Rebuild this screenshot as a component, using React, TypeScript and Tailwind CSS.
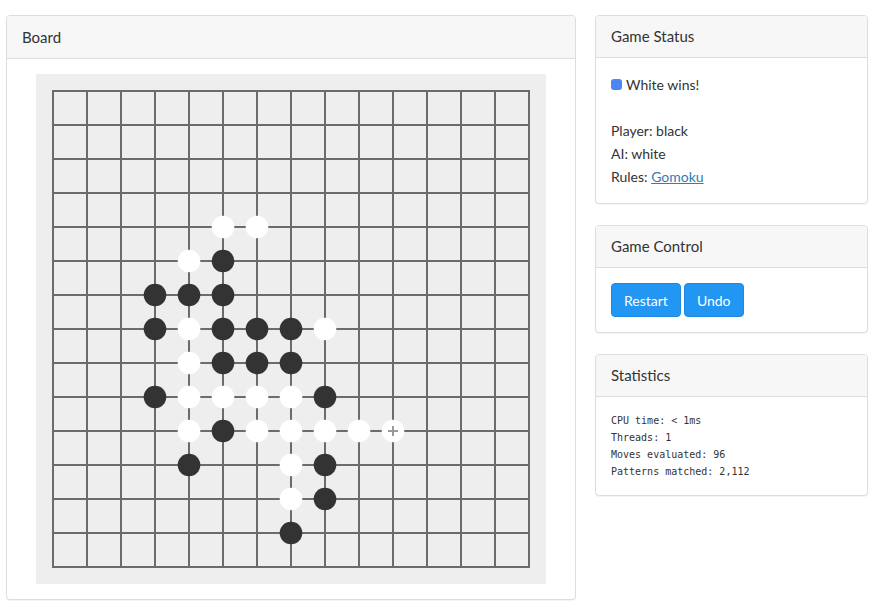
import React from "react";

type S = "b" | "w";
const stones: [number, number, S][] = [
  [5, 4, "w"], [6, 4, "w"],
  [4, 5, "w"], [5, 5, "b"],
  [3, 6, "b"], [4, 6, "b"], [5, 6, "b"],
  [3, 7, "b"], [4, 7, "w"], [5, 7, "b"], [6, 7, "b"], [7, 7, "b"], [8, 7, "w"],
  [4, 8, "w"], [5, 8, "b"], [6, 8, "b"], [7, 8, "b"],
  [3, 9, "b"], [4, 9, "w"], [5, 9, "w"], [6, 9, "w"], [7, 9, "w"], [8, 9, "b"],
  [4, 10, "w"], [5, 10, "b"], [6, 10, "w"], [7, 10, "w"], [8, 10, "w"], [9, 10, "w"], [10, 10, "w"],
  [4, 11, "b"], [7, 11, "w"], [8, 11, "b"],
  [7, 12, "w"], [8, 12, "b"],
  [7, 13, "b"],
];

function Board() {
  const c = (i: number) => 17 + 34 * i;
  const lines = [];
  for (let i = 0; i < 15; i++) {
    lines.push(<line key={"h" + i} x1={c(0)} y1={c(i)} x2={c(14)} y2={c(i)} />);
    lines.push(<line key={"v" + i} x1={c(i)} y1={c(0)} x2={c(i)} y2={c(14)} />);
  }
  return (
    <div className="w-[510px] h-[510px] bg-[#eeeeee] mx-auto">
      <svg width="510" height="510" viewBox="0 0 510 510">
        <g stroke="#6b6b6b" strokeWidth="2" strokeLinecap="square">{lines}</g>
        {stones.map(([x, y, s], i) => (
          <circle key={i} cx={c(x)} cy={c(y)} r="11.3" fill={s === "b" ? "#333333" : "#ffffff"} />
        ))}
        <g stroke="#9a9a9a" strokeWidth="2">
          <line x1={c(10) - 5} y1={c(10)} x2={c(10) + 5} y2={c(10)} />
          <line x1={c(10)} y1={c(10) - 5} x2={c(10)} y2={c(10) + 5} />
        </g>
      </svg>
    </div>
  );
}

function Card({
  title,
  children,
  bodyClass = "",
  tall = false,
}: {
  title: string;
  children: React.ReactNode;
  bodyClass?: string;
  tall?: boolean;
}) {
  return (
    <div className="border border-[#dddddd] rounded-[4px] bg-white shadow-[0_1px_1px_rgba(0,0,0,0.05)]">
      <div
        className={
          (tall ? "h-[43px] " : "h-[42px] ") +
          "bg-[#f7f7f7] border-b border-[#dddddd] rounded-t-[3px] px-[15px] flex items-center text-[15px] text-[#333333]"
        }
      >
        {title}
      </div>
      <div className={"p-[15px] " + bodyClass}>{children}</div>
    </div>
  );
}

export default function App() {
  return (
    <div
      className="w-[881px] h-[615px] bg-white flex items-start pt-[15px] pl-[6px] text-[#333333]"
      style={{ fontFamily: "Lato, 'Noto Sans', sans-serif" }}
    >
      <div className="w-[570px]">
        <Card title="Board" tall>
          <Board />
        </Card>
      </div>
      <div className="w-[273px] ml-[19px] flex flex-col gap-[21px]">
        <Card title="Game Status" bodyClass="text-[14px] leading-[23px]">
          <div className="flex items-center">
            <span className="inline-block w-[11px] h-[11px] rounded-[3px] bg-[#4a87f2] mr-[4px]" />
            <span>White wins!</span>
          </div>
          <div className="h-[23px]" />
          <div>Player: black</div>
          <div>AI: white</div>
          <div>
            Rules: <a className="text-[#337ab7] underline" href="#">Gomoku</a>
          </div>
        </Card>
        <Card title="Game Control">
          <div className="flex gap-[3px]">
            <button className="h-[34px] px-[12px] rounded-[4px] bg-[#2196f3] border border-[#1e88e5] text-white text-[14px]">
              Restart
            </button>
            <button className="h-[34px] px-[12px] rounded-[4px] bg-[#2196f3] border border-[#1e88e5] text-white text-[14px]">
              Undo
            </button>
          </div>
        </Card>
        <Card title="Statistics" bodyClass="text-[10px] leading-[17px]">
          <div style={{ fontFamily: "'DejaVu Sans Mono', monospace" }}>
            <div>CPU time: &lt; 1ms</div>
            <div>Threads: 1</div>
            <div>Moves evaluated: 96</div>
            <div>Patterns matched: 2,112</div>
          </div>
        </Card>
      </div>
    </div>
  );
}
